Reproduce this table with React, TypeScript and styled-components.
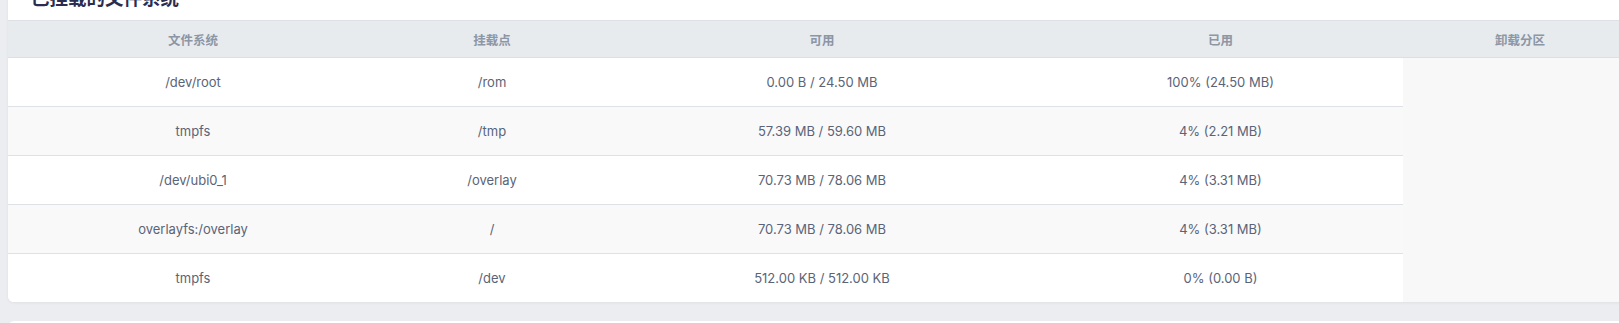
import styled, { createGlobalStyle } from "styled-components";

type Mount = {
  fs: string;
  point: string;
  free: string;
  used: string;
};

const mounts: Mount[] = [
  { fs: "/dev/root", point: "/rom", free: "0.00 B / 24.50 MB", used: "100% (24.50 MB)" },
  { fs: "tmpfs", point: "/tmp", free: "57.39 MB / 59.60 MB", used: "4% (2.21 MB)" },
  { fs: "/dev/ubi0_1", point: "/overlay", free: "70.73 MB / 78.06 MB", used: "4% (3.31 MB)" },
  { fs: "overlayfs:/overlay", point: "/", free: "70.73 MB / 78.06 MB", used: "4% (3.31 MB)" },
  { fs: "tmpfs", point: "/dev", free: "512.00 KB / 512.00 KB", used: "0% (0.00 B)" },
];

// column widths, the last header column has no body cell
const columns = [
  { title: "文件系统", width: 370 },
  { title: "挂载点", width: 228 },
  { title: "可用", width: 432 },
  { title: "已用", width: 365 },
  { title: "卸载分区", width: 234 },
];

const App = () => {
  return (
    <>
      <GlobalStyle />
      <StyledPage>
        <StyledCard>
          <StyledTitle>已挂载的文件系统</StyledTitle>
          <StyledTable>
            <StyledHeadRow>
              {columns.map((col) => (
                <StyledHeadCell key={col.title} $width={col.width}>
                  {col.title}
                </StyledHeadCell>
              ))}
            </StyledHeadRow>
            {mounts.map((m, i) => (
              <StyledRow key={i} $striped={i % 2 === 1} $last={i === mounts.length - 1}>
                <StyledCell $width={columns[0].width}>{m.fs}</StyledCell>
                <StyledCell $width={columns[1].width}>{m.point}</StyledCell>
                <StyledCell $width={columns[2].width}>{m.free}</StyledCell>
                <StyledCell $width={columns[3].width}>{m.used}</StyledCell>
              </StyledRow>
            ))}
          </StyledTable>
        </StyledCard>
        <StyledNextCard />
      </StyledPage>
    </>
  );
};

export default App;

const GlobalStyle = createGlobalStyle`
  html, body {
    margin: 0;
    padding: 0;
    overflow: hidden;
    background: #ebedf0;
  }
  body {
    font-family: Inter, "Noto Sans CJK SC", sans-serif;
  }
`;

const StyledPage = styled.div`
  display: flex;
  flex-direction: column;
  gap: 19px;
  padding-left: 8px;
  margin-top: -26px;
`;

const StyledCard = styled.div`
  width: 1629px;
  background: #ffffff;
  border-radius: 6px;
  overflow: hidden;
  box-shadow: 0 1px 3px rgba(30, 40, 60, 0.06);
`;

const StyledTitle = styled.div`
  padding-left: 23px;
  height: 46px;
  line-height: 46px;
  font-family: "Noto Sans CJK SC", Inter, sans-serif;
  font-size: 18.5px;
  font-weight: 700;
  color: #2b2d50;
`;

const StyledTable = styled.div`
  display: flex;
  flex-direction: column;
  background: #f8f8f8;
`;

const StyledHeadRow = styled.div`
  display: flex;
  height: 36px;
  background: #e8ebee;
  border-top: 1px solid #dcdfe3;
  border-bottom: 1px solid #dcdfe3;
`;

const StyledHeadCell = styled.div<{ $width: number }>`
  flex: 0 0 ${(p) => p.$width}px;
  display: flex;
  align-items: center;
  justify-content: center;
  font-family: "Noto Sans CJK SC", Inter, sans-serif;
  font-size: 12.5px;
  font-weight: 700;
  color: #8c96a5;
`;

const StyledRow = styled.div<{ $striped: boolean; $last: boolean }>`
  display: flex;
  width: 1395px;
  height: 48px;
  background: ${(p) => (p.$striped ? "#f9f9f9" : "#ffffff")};
  border-bottom: ${(p) => (p.$last ? "none" : "1px solid #dee1e5")};
`;

const StyledCell = styled.div<{ $width: number }>`
  flex: 0 0 ${(p) => p.$width}px;
  display: flex;
  align-items: center;
  justify-content: center;
  font-size: 13px;
  color: #5a6478;
`;

const StyledNextCard = styled.div`
  width: 1629px;
  height: 120px;
  background: #ffffff;
  border-radius: 6px;
`;
